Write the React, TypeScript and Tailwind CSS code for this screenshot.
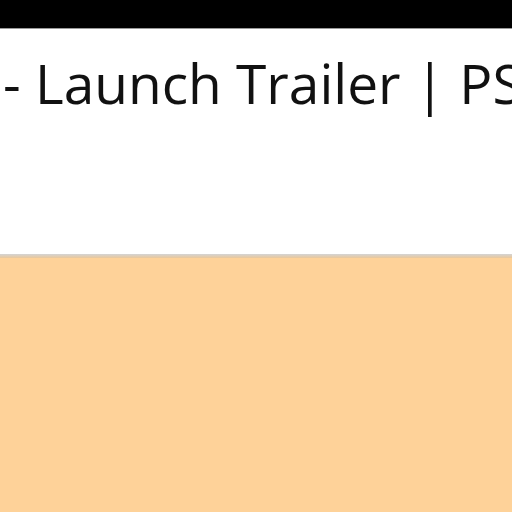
export default function App() {
  return (
    <div className="w-[512px] h-[512px] overflow-hidden flex flex-col bg-[#fed299]" style={{ fontFamily: '"Open Sans", sans-serif' }}>
      <div className="h-[29px] bg-black border-b border-[#9a9a9a] shrink-0" />
      <div className="h-[225px] bg-white shrink-0 overflow-hidden">
        <div className="whitespace-nowrap text-[55px] leading-none text-[#111] pt-[26px] pl-[3px]">
          - Launch Trailer | PS5 Games
        </div>
      </div>
      <div className="h-[4px] bg-gradient-to-b from-[#d4d4d4] to-[#e9c79a] shrink-0" />
      <div className="flex-1" />
    </div>
  );
}
